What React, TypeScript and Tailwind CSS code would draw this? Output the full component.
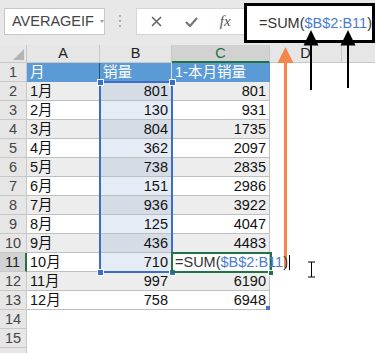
import React from 'react';

const rows: [string, number, number | null][] = [
  ['1月', 801, 801],
  ['2月', 130, 931],
  ['3月', 804, 1735],
  ['4月', 362, 2097],
  ['5月', 738, 2835],
  ['6月', 151, 2986],
  ['7月', 936, 3922],
  ['8月', 125, 4047],
  ['9月', 436, 4483],
  ['10月', 710, null],
  ['11月', 997, 6190],
  ['12月', 758, 6948],
];

const Formula = () => (
  <>
    <span className="text-[#333]">=SUM(</span>
    <span className="text-[#4a7bd0]">$B$2:B11</span>
    <span className="text-[#333]">)</span>
  </>
);

function RowHead({ n, active }: { n?: number; active?: boolean }) {
  return (
    <div
      className={`w-[27px] shrink-0 h-full flex items-center justify-center border-b border-[#c8c8c8] ${
        active ? 'bg-[#d2d2d2] border-r-2 border-r-[#217346] text-[#222]' : 'bg-[#e6e6e6] border-r border-r-[#c8c8c8] text-[#444]'
      }`}
    >
      {n}
    </div>
  );
}

export default function App() {
  return (
    <div className="relative w-[375px] h-[353px] overflow-hidden bg-white font-['Liberation_Sans','Noto_Sans_CJK_SC',sans-serif] text-[14.5px] leading-none">
      {/* Formula bar */}
      <div className="h-[45px] bg-[#e8e8e8] flex items-start">
        <div className="ml-[4px] mt-[8px] w-[101px] h-[27px] bg-white border border-[#c8c8c8] flex items-center pl-[7px] text-[#444] text-[14.5px]">
          <span>AVERAGEIF</span>
          <svg className="ml-[6px]" width="8" height="5" viewBox="0 0 8 5">
            <path d="M0 0h8L4 5z" fill="#888" />
          </svg>
        </div>
        <div className="w-[31px] mt-[15px] flex flex-col items-center gap-[3px]">
          <div className="w-[2px] h-[2px] bg-[#b0b0b0]" />
          <div className="w-[2px] h-[2px] bg-[#b0b0b0]" />
          <div className="w-[2px] h-[2px] bg-[#b0b0b0]" />
        </div>
        <div className="mt-[8px] w-[109px] h-[27px] bg-white border border-[#d4d4d4] border-r-0 flex items-center">
          <svg className="ml-[14px]" width="11" height="11" viewBox="0 0 11 11">
            <path d="M1 1l9 9M10 1l-9 9" stroke="#666" strokeWidth="1.6" />
          </svg>
          <svg className="ml-[23px]" width="13" height="10" viewBox="0 0 13 10">
            <path d="M1 5l4 4L12 1" stroke="#777" strokeWidth="2.2" fill="none" />
          </svg>
          <span className="ml-[22px] italic font-['Liberation_Serif',serif] text-[15px] text-[#555]">fx</span>
        </div>
        <div className="mt-[3px] flex-1 h-[40px] border-[3px] border-black bg-white flex items-center pl-[12px] text-[14.5px] whitespace-nowrap">
          <Formula />
        </div>
      </div>

      {/* Column headers */}
      <div className="flex h-[18px] text-[#222]">
        <div className="w-[27px] h-full bg-[#e6e6e6] border-r border-b border-[#c8c8c8] flex items-end justify-end p-[2px]">
          <svg width="11" height="11" viewBox="0 0 11 11">
            <path d="M11 0v11H0z" fill="#b4b4b4" />
          </svg>
        </div>
        <div className="w-[73px] h-full bg-[#e6e6e6] border-r border-b border-[#c8c8c8] flex items-center justify-center">A</div>
        <div className="w-[72px] h-full bg-[#e6e6e6] border-r border-b border-[#c8c8c8] flex items-center justify-center">B</div>
        <div className="w-[98px] h-full bg-[#d2d2d2] border-r border-r-[#c8c8c8] border-b-2 border-b-[#217346] flex items-center justify-center text-[#217346]">C</div>
        <div className="w-[72px] h-full bg-[#e6e6e6] border-r border-b border-[#c8c8c8] flex items-center justify-center">D</div>
        <div className="flex-1 h-full bg-[#e6e6e6] border-b border-[#c8c8c8]" />
      </div>

      {/* Row 1 */}
      <div className="flex h-[19px]">
        <RowHead n={1} />
        <div className="w-[73px] h-full bg-[#5b9bd5] border-r border-r-[#2f4f74] text-white flex items-center px-[3px]">月</div>
        <div className="w-[72px] h-full bg-[#5b9bd5] border-r border-r-[#cfe0f1] text-white flex items-center px-[3px]">销量</div>
        <div className="w-[98px] h-full bg-[#5b9bd5] text-white flex items-center px-[3px]">1-本月销量</div>
      </div>

      {rows.map(([m, b, c], i) => {
        const n = i + 2;
        const band = i % 2 === 0;
        const active = n === 11;
        return (
          <div key={n} className="flex h-[19px] text-[#111]">
            <RowHead n={n} active={active} />
            <div className={`w-[73px] h-full border-b border-[#bfbfbf] flex items-center px-[3px] ${band ? 'bg-[#ededed]' : 'bg-white'}`}>
              {m}
            </div>
            <div
              className={`w-[72px] h-full border-b border-[#bfbfbf] flex items-center justify-end px-[4px] ${
                n <= 11 ? (band ? 'bg-[#d6dce6]' : 'bg-[#e6ecf6]') : band ? 'bg-[#ededed]' : 'bg-white'
              }`}
            >
              {b}
            </div>
            <div className={`w-[98px] h-full border-b border-r border-[#bfbfbf] flex items-center px-[3px] ${band ? 'bg-[#ededed]' : 'bg-white'} ${active ? 'justify-start whitespace-nowrap' : 'justify-end'}`}>
              {c === null ? (
                <span className="relative z-10 flex items-center">
                  <Formula />
                  <span className="ml-[1px] w-[1px] h-[15px] bg-black" />
                </span>
              ) : (
                c
              )}
            </div>
          </div>
        );
      })}

      <div className="flex h-[19px]">
        <RowHead n={14} />
      </div>
      <div className="flex h-[19px]">
        <RowHead n={15} />
      </div>
      <div className="flex h-[19px]">
        <RowHead />
      </div>

      {/* Selection B2:B11 */}
      <div className="absolute left-[99px] top-[81px] w-[74px] h-[192px] border-2 border-[#3a6fc6]" />
      {[
        'left-[97px] top-[79px]',
        'left-[169px] top-[79px]',
        'left-[97px] top-[269px]',
        'left-[169px] top-[269px]',
      ].map((p) => (
        <div key={p} className={`absolute ${p} w-[7px] h-[7px] bg-[#3a6fc6] border border-white`} />
      ))}

      {/* Active cell C11 */}
      <div className="absolute left-[171px] top-[252px] w-[101px] h-[21px] border-2 border-[#217346]" />
      <div className="absolute left-[268px] top-[270px] w-[6px] h-[6px] bg-[#217346] border border-white" />

      {/* table resize handle */}
      <div className="absolute left-[266px] top-[306px] w-[4px] h-[4px] bg-[#4a72c4]" />

      {/* Annotations */}
      <svg className="absolute inset-0 pointer-events-none" width="375" height="353" viewBox="0 0 375 353">
        <path d="M311 30l-7.5 15.5h15z" fill="#000" />
        <rect x="310" y="44" width="2" height="46" fill="#000" />
        <path d="M348 30l-7.5 15.5h15z" fill="#000" />
        <rect x="347" y="44" width="2" height="44" fill="#000" />
        <path d="M285.5 47l-8 16h16z" fill="#f4874d" />
        <rect x="284" y="62" width="3" height="206" fill="#f4874d" />
        <path d="M308 262h7M311.5 262v15M308 277h7" stroke="#000" strokeWidth="1" fill="none" />
      </svg>
    </div>
  );
}
